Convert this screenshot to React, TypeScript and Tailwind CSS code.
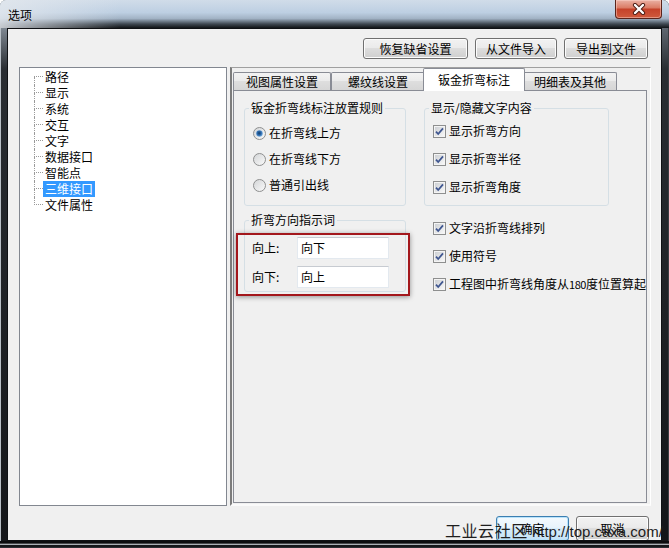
import React from 'react';

const treeItems = ['路径', '显示', '系统', '交互', '文字', '数据接口', '智能点', '三维接口', '文件属性'];
const tabs = ['视图属性设置', '螺纹线设置', '钣金折弯标注', '明细表及其他'];

function WinButton({ children, className = '', primary = false }: { children: React.ReactNode; className?: string; primary?: boolean }) {
    return (
        <div
            className={`flex shrink-0 items-center justify-center rounded-[3px] border text-[12px] leading-[14px] text-black ${
                primary
                    ? 'border-[#3c7fb1] bg-[linear-gradient(to_bottom,#f4fafe_0%,#e8f4fc_45%,#d6ecfa_50%,#c4e2f6_100%)] shadow-[inset_0_0_0_1px_#b9e3fb]'
                    : 'border-[#707070] bg-[linear-gradient(to_bottom,#f2f2f2_0%,#ebebeb_45%,#dddddd_50%,#cfcfcf_100%)] shadow-[inset_0_0_0_1px_#fcfcfc]'
            } ${className}`}
        >
            {children}
        </div>
    );
}

function Radio({ checked }: { checked?: boolean }) {
    return (
        <svg width="13" height="13" viewBox="0 0 13 13" className="shrink-0">
            <defs>
                <linearGradient id="rbg" x1="0" y1="0" x2="1" y2="1">
                    <stop offset="0" stopColor="#d2d4d6" />
                    <stop offset="1" stopColor="#fbfbfb" />
                </linearGradient>
                <radialGradient id="rdot" cx="0.45" cy="0.45" r="0.6">
                    <stop offset="0" stopColor="#103d6b" />
                    <stop offset="0.55" stopColor="#2f6db0" />
                    <stop offset="1" stopColor="#8ec0ec" />
                </radialGradient>
            </defs>
            <circle cx="6.5" cy="6.5" r="6" fill="url(#rbg)" stroke="#8e8f8f" />
            {checked && <circle cx="6.5" cy="6.5" r="3.3" fill="url(#rdot)" />}
        </svg>
    );
}

function Check() {
    return (
        <svg width="13" height="13" viewBox="0 0 13 13" className="shrink-0">
            <defs>
                <linearGradient id="cbg" x1="0" y1="0" x2="1" y2="1">
                    <stop offset="0" stopColor="#cdd0d4" />
                    <stop offset="1" stopColor="#f7f7f7" />
                </linearGradient>
            </defs>
            <rect x="0.5" y="0.5" width="12" height="12" fill="#f4f4f4" stroke="#8e8f8f" />
            <rect x="2" y="2" width="9" height="9" fill="url(#cbg)" />
            <path d="M3 6.6 L5.2 9 L10 3.4" stroke="#3f5690" strokeWidth="1.8" fill="none" />
        </svg>
    );
}

function GroupBox({ title, className = '', children }: { title: string; className?: string; children?: React.ReactNode }) {
    return (
        <div className={`relative rounded-[3px] border border-[#d5dfe5] ${className}`}>
            <span className="absolute -top-[8px] left-[4px] bg-[#f0f0f0] px-[2px] text-[12px] leading-[14px]">{title}</span>
            {children}
        </div>
    );
}

export default function App() {
    return (
        <div className="flex h-[548px] w-[669px] flex-col overflow-hidden rounded-t-[6px] bg-[#121416] font-['Noto_Sans_CJK_SC',sans-serif] text-black">
            {/* title bar */}
            <div className="flex h-[28px] shrink-0 items-start bg-[linear-gradient(to_right,rgba(226,231,237,0.85)_0%,rgba(226,231,237,0)_18%),linear-gradient(to_bottom,#d0dce9_0%,#bdcfe2_45%,#a2b3c5_66%,#3e4750_86%,#111417_100%)]">
                <span className="pl-[8px] pt-[8px] text-[12px] leading-[14px]">选项</span>
                <div className="ml-auto mr-[7px] flex h-[19px] w-[47px] items-center justify-center rounded-b-[4px] border border-t-0 border-[#5a241b] bg-[linear-gradient(to_bottom,#eab1a4_0%,#db7d67_42%,#c5422a_52%,#cf5a3d_100%)] shadow-[inset_0_0_0_1px_rgba(255,220,210,0.45)]">
                    <svg width="14" height="12" viewBox="0 0 14 12">
                        <path d="M3 2 L11 10 M11 2 L3 10" stroke="#4a1a12" strokeWidth="4.2" strokeLinecap="round" />
                        <path d="M3 2 L11 10 M11 2 L3 10" stroke="#ffffff" strokeWidth="2.4" strokeLinecap="round" />
                    </svg>
                </div>
            </div>

            <div className="flex flex-1">
                <div className="w-[7px] border-l border-[#b8bfc6] bg-[linear-gradient(to_bottom,#7f8892_0%,#2a2e33_8%,#15171a_100%)]" />

                {/* client area */}
                <div className="relative flex flex-1 flex-col border border-[#0f1114] bg-[#f0f0f0] px-[11px] pr-[10px] pt-[9px]">
                    <div className="flex justify-end gap-[7px] pr-[3px]">
                        <WinButton className="h-[21px] w-[105px]">恢复缺省设置</WinButton>
                        <WinButton className="h-[21px] w-[82px]">从文件导入</WinButton>
                        <WinButton className="h-[21px] w-[84px]">导出到文件</WinButton>
                    </div>

                    <div className="mt-[8px] flex h-[439px] gap-[3px]">
                        {/* tree */}
                        <div className="w-[208px] border border-[#828790] bg-white pl-[14px] pt-[1px]">
                            {treeItems.map((item, i) => (
                                <div key={item} className="flex h-[16px] items-stretch">
                                    <div className="flex w-[9px] flex-col">
                                        <div className={`h-[8px] border-b border-dotted border-[#9a9a9a] ${i > 0 ? 'border-l' : ''}`} />
                                        <div className={`h-[8px] border-dotted border-[#9a9a9a] ${i < treeItems.length - 1 ? 'border-l' : ''}`} />
                                    </div>
                                    <span
                                        className={`px-[2px] text-[12px] leading-[16px] ${
                                            item === '三维接口' ? 'bg-[#3399ff] text-white' : 'text-black'
                                        }`}
                                    >
                                        {item}
                                    </span>
                                </div>
                            ))}
                        </div>

                        {/* tab control */}
                        <div className="flex flex-1 flex-col border-b-2 border-l-2 border-r border-t border-b-[#fafafa] border-l-[#7c7c7c] border-r-[#ffffff] border-t-[#a0a0a0] pl-[1px] pr-[3px]">
                            <div className="flex h-[22px] items-end">
                                {tabs.map((t, i) =>
                                    i === 2 ? (
                                        <div
                                            key={t}
                                            className="relative z-10 -mx-[2px] -mb-[1px] flex h-[23px] w-[102px] items-center justify-center rounded-t-[2px] border border-b-0 border-[#898c95] bg-white text-[12px] leading-[14px]"
                                        >
                                            {t}
                                        </div>
                                    ) : (
                                        <div
                                            key={t}
                                            className={`flex h-[18px] items-center justify-center rounded-t-[2px] border border-b-0 border-[#898c95] bg-[linear-gradient(to_bottom,#f3f3f3_0%,#ebebeb_45%,#dedede_50%,#d6d6d6_100%)] text-[12px] leading-[14px] ${
                                                i === 0 ? 'w-[98px]' : 'w-[94px]'
                                            }`}
                                        >
                                            {t}
                                        </div>
                                    )
                                )}
                            </div>

                            <div className="mb-[1px] flex-1 border border-[#898c95] bg-[#f0f0f0] pl-[10px] pt-[17px]">
                                <div className="flex gap-[18px]">
                                    <GroupBox title="钣金折弯线标注放置规则" className="h-[98px] w-[162px] pl-[8px] pt-[11px]">
                                        {['在折弯线上方', '在折弯线下方', '普通引出线'].map((r, i) => (
                                            <div key={r} className="flex h-[26px] items-center gap-[3px]">
                                                <Radio checked={i === 0} />
                                                <span className="text-[12px] leading-[14px]">{r}</span>
                                            </div>
                                        ))}
                                    </GroupBox>
                                    <GroupBox title="显示/隐藏文字内容" className="h-[98px] w-[185px] pl-[8px] pt-[8px]">
                                        {['显示折弯方向', '显示折弯半径', '显示折弯角度'].map((c) => (
                                            <div key={c} className="flex h-[28px] items-center gap-[3px]">
                                                <Check />
                                                <span className="text-[12px] leading-[14px]">{c}</span>
                                            </div>
                                        ))}
                                    </GroupBox>
                                </div>

                                <div className="mt-[8px] flex items-start gap-[18px]">
                                    <GroupBox title="折弯方向指示词" className="mt-[6px] h-[72px] w-[162px] pl-[7px] pt-[16px]">
                                        <div className="flex h-[22px] items-center">
                                            <span className="w-[45px] text-[12px] leading-[14px]">向上:</span>
                                            <div className="flex h-[22px] w-[92px] items-center border border-[#e3e9ef] border-t-[#c7cbd1] bg-white pl-[3px] text-[12px] leading-[14px]">
                                                向下
                                            </div>
                                        </div>
                                        <div className="mt-[7px] flex h-[22px] items-center">
                                            <span className="w-[45px] text-[12px] leading-[14px]">向下:</span>
                                            <div className="flex h-[22px] w-[92px] items-center border border-[#e3e9ef] border-t-[#c7cbd1] bg-white pl-[3px] text-[12px] leading-[14px]">
                                                向上
                                            </div>
                                        </div>
                                        {/* red highlight frame */}
                                        <div className="pointer-events-none absolute -left-[9px] top-[12px] h-[63px] w-[174px] border-2 border-[#a3171c] shadow-[0_1px_5px_rgba(0,0,0,0.4)]" />
                                    </GroupBox>
                                    <div className="pl-[9px]">
                                        {['文字沿折弯线排列', '使用符号'].map((c) => (
                                            <div key={c} className="flex h-[28px] items-center gap-[3px]">
                                                <Check />
                                                <span className="whitespace-nowrap text-[12px] leading-[14px]">{c}</span>
                                            </div>
                                        ))}
                                        <div className="flex h-[28px] items-center gap-[3px]">
                                            <Check />
                                            <span className="whitespace-nowrap text-[12px] leading-[14px]">
                                                工程图中折弯线角度从<span className="text-[11px] tracking-[-0.4px]">180</span>度位置算起
                                            </span>
                                        </div>
                                    </div>
                                </div>
                            </div>
                        </div>
                    </div>

                    <div className="mt-[10px] flex h-[24px] justify-end gap-[7px] overflow-hidden pr-[2px]">
                        <WinButton primary className="h-[25px] w-[73px]">确定</WinButton>
                        <WinButton className="h-[25px] w-[73px]">取消</WinButton>
                    </div>

                    {/* watermark */}
                    <div className="pointer-events-none absolute left-[437px] top-[492px] flex items-baseline gap-[4px] whitespace-nowrap text-[#1e1e1e]">
                        <span className="text-[16px] leading-[18px] tracking-[0.6px]">工业云社区</span>
                        <span className="font-['Liberation_Sans',sans-serif] text-[15px] leading-[18px]">http://top.caxa.com/</span>
                    </div>
                </div>

                <div className="w-[7px] border-r border-[#3a3e43] bg-[linear-gradient(to_bottom,#5f6770_0%,#2a2e33_8%,#141619_100%)]" />
            </div>

            <div className="h-[7px] border-b border-[#2c3035] bg-[linear-gradient(to_bottom,#0c0d0f_0%,#0c0d0f_40%,#b9bec4_45%,#b9bec4_58%,#16181b_62%)]" />
        </div>
    );
}
